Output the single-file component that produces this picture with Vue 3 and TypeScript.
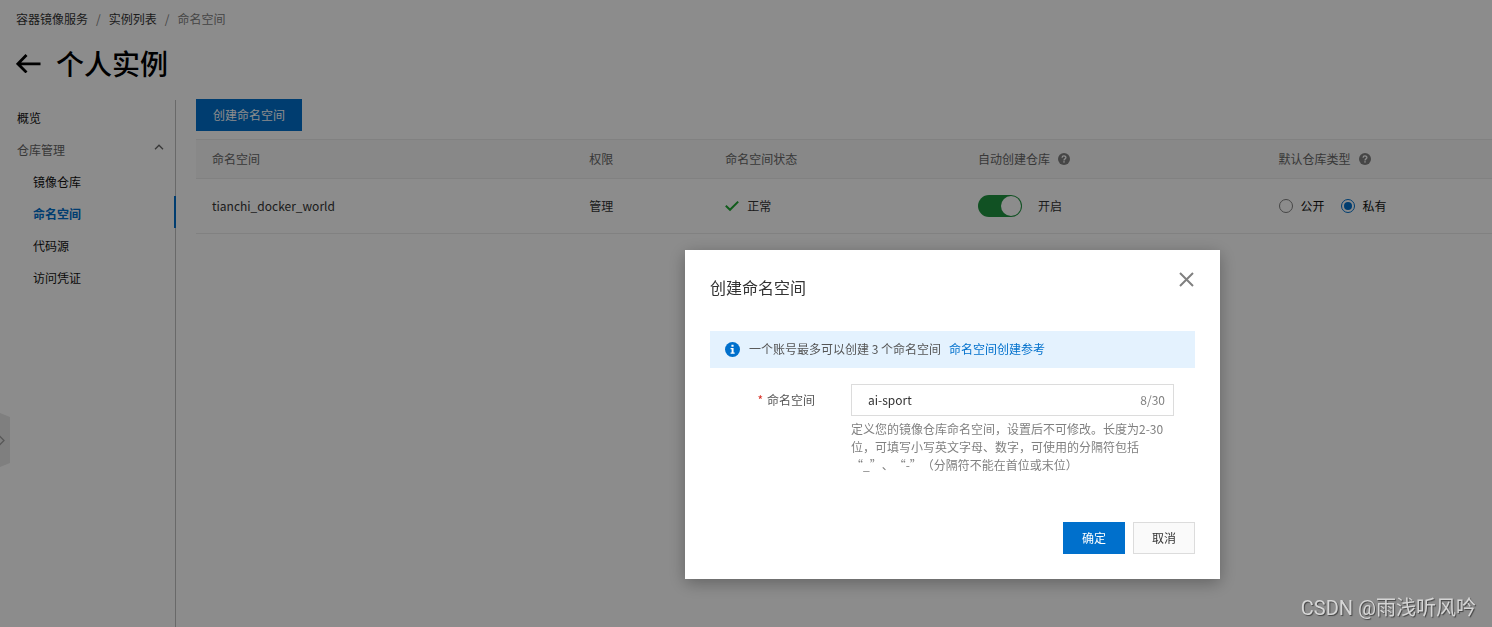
<script setup lang="ts">
import { computed, ref } from 'vue'

interface NavItem {
  label: string
  active?: boolean
}

const navItems: NavItem[] = [
  { label: '镜像仓库' },
  { label: '命名空间', active: true },
  { label: '代码源' },
  { label: '访问凭证' },
]

const maxLength = 30
const namespaceName = ref('ai-sport')
const counter = computed(() => `${namespaceName.value.length}/${maxLength}`)
const autoCreate = ref(true)
const repoType = ref<'public' | 'private'>('private')
</script>

<template>
  <div class="page" lang="zh-CN">
    <header class="header">
      <nav class="breadcrumb" aria-label="breadcrumb">
        <a href="#">容器镜像服务</a>
        <span class="sep">/</span>
        <a href="#">实例列表</a>
        <span class="sep">/</span>
        <span class="current">命名空间</span>
      </nav>
      <div class="title-row">
        <button class="back" type="button" aria-label="返回">
          <svg width="25" height="20" viewBox="0 0 25 20" fill="none" stroke="currentColor" stroke-width="2.8">
            <path d="M2 10.8H24.5M10.5 2L1.9 10.8L10.5 19.4" />
          </svg>
        </button>
        <h1>个人实例</h1>
      </div>
    </header>

    <div class="body">
      <aside class="sidebar">
        <a class="nav-item" href="#">概览</a>
        <button class="nav-group" type="button">
          <span>仓库管理</span>
          <svg width="10" height="6" viewBox="0 0 10 6" fill="none" stroke="currentColor" stroke-width="1.3">
            <path d="M1 5.2L5 1.2L9 5.2" />
          </svg>
        </button>
        <a
          v-for="item in navItems"
          :key="item.label"
          class="nav-item sub"
          :class="{ active: item.active }"
          href="#"
        >{{ item.label }}</a>
      </aside>

      <main class="content">
        <button class="btn primary create" type="button">创建命名空间</button>
        <table class="table">
          <colgroup>
            <col class="c-name" />
            <col class="c-perm" />
            <col class="c-status" />
            <col class="c-auto" />
            <col />
          </colgroup>
          <thead>
            <tr>
              <th>命名空间</th>
              <th>权限</th>
              <th>命名空间状态</th>
              <th>
                <span class="with-icon">自动创建仓库
                  <svg class="help" width="12" height="12" viewBox="0 0 12 12">
                    <circle cx="6" cy="6" r="6" fill="#808080" />
                    <path d="M4.1 4.7C4.1 2.4 7.9 2.4 7.9 4.6C7.9 5.9 6 5.9 6 7.4" fill="none" stroke="#fff" stroke-width="1.3" />
                    <rect x="5.3" y="8.2" width="1.4" height="1.4" fill="#fff" />
                  </svg>
                </span>
              </th>
              <th>
                <span class="with-icon">默认仓库类型
                  <svg class="help" width="12" height="12" viewBox="0 0 12 12">
                    <circle cx="6" cy="6" r="6" fill="#808080" />
                    <path d="M4.1 4.7C4.1 2.4 7.9 2.4 7.9 4.6C7.9 5.9 6 5.9 6 7.4" fill="none" stroke="#fff" stroke-width="1.3" />
                    <rect x="5.3" y="8.2" width="1.4" height="1.4" fill="#fff" />
                  </svg>
                </span>
              </th>
            </tr>
          </thead>
          <tbody>
            <tr>
              <td>tianchi_docker_world</td>
              <td>管理</td>
              <td>
                <span class="with-icon">
                  <svg width="14" height="12" viewBox="0 0 14 12" fill="none" stroke="#1ea832" stroke-width="2">
                    <path d="M0.8 5.8L5 9.8L13.2 1.6" />
                  </svg>
                  正常
                </span>
              </td>
              <td>
                <label class="switch">
                  <input v-model="autoCreate" type="checkbox" role="switch" />
                  <span>开启</span>
                </label>
              </td>
              <td>
                <div class="radios">
                  <label><input v-model="repoType" type="radio" name="repo-type" value="public" /><span>公开</span></label>
                  <label><input v-model="repoType" type="radio" name="repo-type" value="private" /><span>私有</span></label>
                </div>
              </td>
            </tr>
          </tbody>
        </table>
      </main>
    </div>

    <div class="handle">
      <svg width="10" height="54" viewBox="0 0 10 54">
        <path d="M0 0L10 4V50L0 54Z" fill="#e8e8e8" />
        <path d="M-0.5 23L4 27.5L-0.5 32" fill="none" stroke="#a0a0a0" stroke-width="1.3" />
      </svg>
    </div>

    <div class="overlay">
      <section class="dialog" role="dialog" aria-modal="true" aria-labelledby="dialog-title">
        <div class="dialog-head">
          <h2 id="dialog-title">创建命名空间</h2>
          <button class="close" type="button" aria-label="关闭">
            <svg width="15" height="15" viewBox="0 0 15 15" fill="none" stroke="currentColor" stroke-width="2">
              <path d="M1 1L14 14M14 1L1 14" />
            </svg>
          </button>
        </div>

        <div class="notice">
          <svg width="15" height="15" viewBox="0 0 14 14">
            <circle cx="7" cy="7" r="7" fill="#0070cc" />
            <path d="M6 2.6H8V4.4H6ZM5.2 5.5H8V9.8H9V11H5.2V9.8H6.2V6.7H5.2Z" fill="#fff" />
          </svg>
          <span>一个账号最多可以创建 3 个命名空间</span>
          <a href="#">命名空间创建参考</a>
        </div>

        <form class="form" @submit.prevent>
          <label class="form-label" for="namespace-input"><span class="star">*</span>命名空间</label>
          <div class="field">
            <div class="input-box">
              <input id="namespace-input" v-model="namespaceName" type="text" :maxlength="maxLength" />
              <span class="counter">{{ counter }}</span>
            </div>
            <p class="hint">定义您的镜像仓库命名空间，设置后不可修改。长度为2-30位，可填写小写英文字母、数字，可使用的分隔符包括“_”、“-”（分隔符不能在首位或末位）</p>
          </div>
        </form>

        <div class="dialog-foot">
          <button class="btn primary" type="button">确定</button>
          <button class="btn" type="button">取消</button>
        </div>
      </section>
    </div>

    <div class="watermark">CSDN @雨浅听风吟</div>
  </div>
</template>

<style>
body {
  margin: 0;
  background: #fff;
}
</style>

<style scoped>
.page {
  box-sizing: border-box;
  display: flex;
  flex-direction: column;
  min-height: 100vh;
  overflow: hidden;
  font-family: "Noto Sans CJK SC", sans-serif;
  font-size: 12px;
  line-height: 18px;
  color: #333;
}
a {
  color: inherit;
  text-decoration: none;
}
button {
  font: inherit;
  color: inherit;
  cursor: pointer;
}
svg {
  display: block;
  flex: none;
}
.header {
  padding: 10px 16px 0;
}
.breadcrumb {
  display: flex;
  gap: 8px;
}
.breadcrumb .sep,
.breadcrumb .current {
  color: #808080;
}
.title-row {
  display: flex;
  align-items: center;
  gap: 15px;
  margin-top: 15px;
  color: #000;
}
.back {
  padding: 0;
  border: 0;
  background: none;
}
h1 {
  margin: 0;
  font-size: 28px;
  line-height: 40px;
  font-weight: 500;
}
.body {
  display: flex;
  flex: 1;
  margin-top: 16px;
}
.sidebar {
  box-sizing: border-box;
  flex: none;
  display: flex;
  flex-direction: column;
  width: 176px;
  margin-top: 1px;
  border-right: 1px solid #c0c0c0;
}
.nav-item,
.nav-group {
  line-height: 28px;
  padding: 4px 11px 0 17px;
  color: #111;
}
.nav-group {
  display: flex;
  align-items: center;
  justify-content: space-between;
  border: 0;
  background: none;
  color: #666;
}
.nav-group svg {
  margin-bottom: 6px;
}
.nav-item.sub {
  padding-left: 33px;
}
.nav-item.active {
  margin-right: -1px;
  border-right: 2px solid #0070cc;
  color: #0070cc;
  font-weight: 700;
}
.content {
  flex: 1;
  min-width: 0;
  padding-left: 20px;
}
.btn {
  box-sizing: border-box;
  min-width: 62px;
  height: 32px;
  padding: 0 16px;
  border: 1px solid #dcdcdc;
  background: #fafafa;
  color: #333;
}
.btn.primary {
  border-color: #0070cc;
  background: #0070cc;
  color: #fff;
}
.create {
  display: block;
}
.table {
  width: 100%;
  margin-top: 8px;
  border-collapse: separate;
  border-spacing: 0;
  table-layout: fixed;
}
.c-name { width: 29.1%; }
.c-perm { width: 10.5%; }
.c-status { width: 19.5%; }
.c-auto { width: 23.2%; }
th,
td {
  box-sizing: border-box;
  padding: 0 16px;
  border-bottom: 1px solid #ebebeb;
  text-align: left;
  font-weight: 400;
}
th {
  height: 40px;
  border-top: 1px solid #ebebeb;
  background: #f7f7f7;
  color: #666;
}
td {
  height: 55px;
}
.with-icon {
  display: flex;
  align-items: center;
  gap: 8px;
}
.switch {
  display: flex;
  align-items: center;
  gap: 16px;
}
.switch input {
  appearance: none;
  display: flex;
  justify-content: flex-start;
  box-sizing: border-box;
  width: 44px;
  height: 22px;
  margin: 0;
  padding: 1px;
  border-radius: 11px;
  background: #ccc;
}
.switch input:checked {
  justify-content: flex-end;
  background: #209440;
}
.switch input::before {
  content: "";
  width: 20px;
  height: 20px;
  border-radius: 50%;
  background: #fff;
}
.radios {
  display: flex;
  gap: 16px;
}
.radios label {
  display: flex;
  align-items: center;
  gap: 8px;
  color: #111;
}
.radios input {
  appearance: none;
  box-sizing: border-box;
  width: 14px;
  height: 14px;
  margin: 0;
  border: 1px solid #808080;
  border-radius: 50%;
}
.radios input:checked {
  padding: 2px;
  border-color: #0070cc;
  background: #0070cc content-box;
}
.handle {
  position: absolute;
  left: 0;
  top: 413px;
}
.overlay {
  position: fixed;
  inset: 0;
  display: flex;
  align-items: flex-start;
  justify-content: flex-end;
  padding: 250px 272px 0 0;
  background: rgba(0, 0, 0, 0.45);
}
.dialog {
  box-sizing: border-box;
  width: 535px;
  padding: 21px 25px 25px;
  background: #fff;
  box-shadow: 0 4px 16px rgba(0, 0, 0, 0.3);
}
.dialog-head {
  display: flex;
  align-items: flex-start;
  justify-content: space-between;
}
h2 {
  margin: 4px 0 0;
  font-size: 16px;
  line-height: 24px;
  font-weight: 400;
}
.close {
  padding: 1px;
  border: 0;
  background: none;
  color: #808080;
}
.notice {
  display: flex;
  align-items: center;
  margin-top: 32px;
  padding: 0 15px 1px;
  background: #e4f2fe;
  line-height: 36px;
  color: #555;
}
.notice svg {
  margin-right: 9px;
}
.notice a {
  margin-left: 8px;
  color: #0070cc;
}
.form {
  display: flex;
  gap: 36px;
  margin-top: 16px;
  padding-right: 21px;
}
.form-label {
  flex: none;
  width: 105px;
  line-height: 32px;
  text-align: right;
  color: #555;
}
.star {
  margin-right: 4px;
  color: #d93026;
}
.field {
  flex: 1;
  min-width: 0;
}
.input-box {
  box-sizing: border-box;
  display: flex;
  align-items: center;
  height: 32px;
  padding: 0 8px 0 16px;
  border: 1px solid #dcdcdc;
}
.input-box input {
  flex: 1;
  min-width: 0;
  padding: 0;
  border: 0;
  outline: 0;
  background: none;
  font: inherit;
  color: #333;
}
.counter,
.hint {
  color: #808080;
}
.hint {
  margin: 4px 0 0;
  text-spacing-trim: space-all;
}
.dialog-foot {
  display: flex;
  justify-content: flex-end;
  gap: 8px;
  margin-top: 48px;
}
.watermark {
  position: fixed;
  right: 16px;
  bottom: 4px;
  font-family: Roboto, "Noto Sans CJK SC", sans-serif;
  font-size: 20px;
  line-height: 30px;
  color: #d6d6d6;
  text-shadow: 1px 1px 1px #444;
}
</style>
